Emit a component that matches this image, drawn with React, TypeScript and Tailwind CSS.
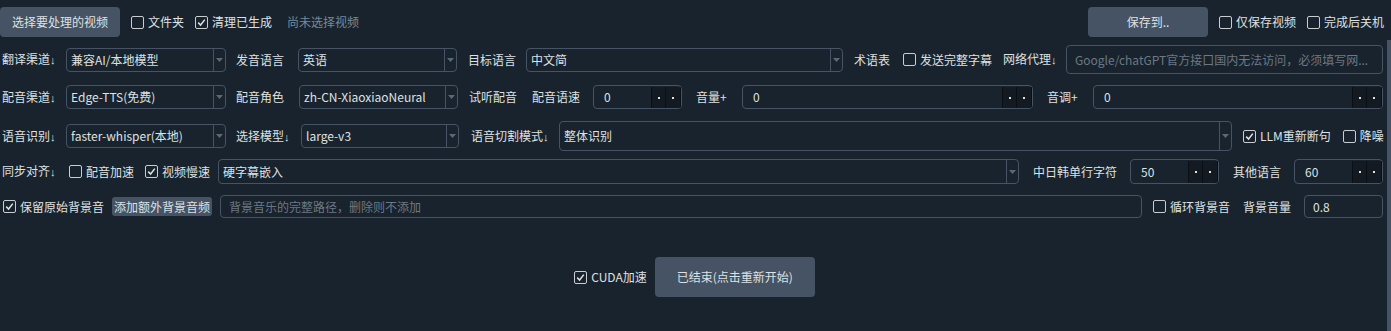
import type { ReactNode } from 'react';

const font = { fontFamily: '"Noto Sans CJK SC", "Microsoft YaHei", sans-serif' };

const Arrow = () => (
    <span className="text-[11px]" style={{ fontFamily: '"Liberation Sans", sans-serif' }}>↓</span>
);

const Check = ({ checked, label, className = '' }: { checked?: boolean; label: string; className?: string }) => (
    <label className={`flex items-center shrink-0 gap-[4px] text-[12px] text-[#dfe1e2] ${className}`}>
        <span className="w-[13px] h-[13px] rounded-[2px] border border-[#c9cdd0] flex items-center justify-center">
            {checked && (
                <svg width="9" height="9" viewBox="0 0 9 9">
                    <polyline points="1.2,4.6 3.6,7 7.8,1.6" fill="none" stroke="#dfe1e2" strokeWidth="1.5" />
                </svg>
            )}
        </span>
        <span>{label}</span>
    </label>
);

const Label = ({ children, w, className = '' }: { children: ReactNode; w: string; className?: string }) => (
    <span className={`shrink-0 text-[12px] text-[#dfe1e2] whitespace-nowrap ${w} ${className}`}>{children}</span>
);

const Combo = ({ value, w, h = 'h-[24px]' }: { value: string; w: string; h?: string }) => (
    <div className={`shrink-0 flex items-stretch border border-[#455364] rounded-[4px] bg-[#19232d] ${w} ${h}`}>
        <span className="flex-1 flex items-center pl-[4px] text-[12px] text-[#dfe1e2] whitespace-nowrap overflow-hidden">{value}</span>
        <span className="w-[12px] border-l border-[#455364] flex items-center justify-center">
            <svg width="7" height="4" viewBox="0 0 7 4">
                <polygon points="0,0 7,0 3.5,4" fill="#5c6975" />
            </svg>
        </span>
    </div>
);

const Spin = ({ value, w, h = 'h-[24px]' }: { value: string; w: string; h?: string }) => (
    <div className={`shrink-0 flex items-stretch border border-[#455364] rounded-[4px] bg-[#19232d] overflow-hidden ${w} ${h}`}>
        <span className="flex-1 flex items-center pl-[10px] text-[12px] text-[#dfe1e2]">{value}</span>
        <span className="w-[15px] mt-[1px] bg-[#131a21] border-l border-r border-[#0b0f13] flex items-center justify-center">
            <span className="w-[2px] h-[2px] bg-[#dfe1e2]" />
        </span>
        <span className="w-[15px] mt-[1px] bg-[#131a21] border-r border-[#0b0f13] flex items-center justify-center">
            <span className="w-[2px] h-[2px] bg-[#dfe1e2]" />
        </span>
    </div>
);

const Input = ({ value, placeholder, w, h }: { value?: string; placeholder?: string; w: string; h: string }) => (
    <div className={`shrink-0 flex items-center border border-[#455364] rounded-[4px] bg-[#19232d] pl-[8px] text-[12px] whitespace-nowrap overflow-hidden ${w} ${h}`}>
        {value ? <span className="text-[#dfe1e2]">{value}</span> : <span className="text-[#6c7883]">{placeholder}</span>}
    </div>
);

export default function App() {
    return (
        <div className="relative w-[1391px] h-[331px] bg-[#19232d] overflow-hidden pt-[7px]" style={font}>
            {/* 第一行 */}
            <div className="flex items-center h-[30px]">
                <button className="w-[120px] h-[30px] rounded-[4px] bg-[#455364] text-[12px] text-[#dfe1e2]">选择要处理的视频</button>
                <Check label="文件夹" className="ml-[11px]" />
                <Check checked label="清理已生成" className="ml-[11px]" />
                <span className="ml-[15px] text-[12px] text-[#788a99]">尚未选择视频</span>
                <div className="flex-1" />
                <button className="w-[120px] h-[30px] rounded-[4px] bg-[#455364] text-[12px] text-[#dfe1e2]">保存到..</button>
                <Check label="仅保存视频" className="ml-[11px]" />
                <Check label="完成后关机" className="ml-[11px] mr-[7px]" />
            </div>

            {/* 翻译 */}
            <div className="flex items-center h-[29px] mt-[8px] pl-[2px]">
                <Label w="w-[64px]">翻译渠道<Arrow /></Label>
                <Combo value="兼容AI/本地模型" w="w-[160px]" />
                <Label w="w-[62px]" className="ml-[10px]">发音语言</Label>
                <Combo value="英语" w="w-[159px]" />
                <Label w="w-[58px]" className="ml-[11px]">目标语言</Label>
                <Combo value="中文简" w="w-[317px]" />
                <Label w="w-[49px]" className="ml-[11px]">术语表</Label>
                <Check label="发送完整字幕" className="w-[100px]" />
                <Label w="w-[63px]">网络代理<Arrow /></Label>
                <Input placeholder="Google/chatGPT官方接口国内无法访问，必须填写网..." w="w-[317px]" h="h-[29px]" />
            </div>

            {/* 配音 */}
            <div className="flex items-center h-[24px] mt-[11px] pl-[2px]">
                <Label w="w-[64px]">配音渠道<Arrow /></Label>
                <Combo value="Edge-TTS(免费)" w="w-[160px]" />
                <Label w="w-[63px]" className="ml-[10px]">配音角色</Label>
                <Combo value="zh-CN-XiaoxiaoNeural" w="w-[159px]" />
                <Label w="w-[63px]" className="ml-[11px]">试听配音</Label>
                <Label w="w-[61px]">配音语速</Label>
                <Spin value="0" w="w-[89px]" />
                <Label w="w-[46px]" className="ml-[14px]">音量+</Label>
                <Spin value="0" w="w-[291px]" />
                <Label w="w-[46px]" className="ml-[14px]">音调+</Label>
                <Spin value="0" w="w-[290px]" />
            </div>

            {/* 识别 */}
            <div className="flex items-center h-[30px] mt-[12px] pl-[2px]">
                <Label w="w-[64px]">语音识别<Arrow /></Label>
                <Combo value="faster-whisper(本地)" w="w-[160px]" />
                <Label w="w-[65px]" className="ml-[10px]">选择模型<Arrow /></Label>
                <Combo value="large-v3" w="w-[158px]" />
                <Label w="w-[88px]" className="ml-[12px]">语音切割模式<Arrow /></Label>
                <Combo value="整体识别" w="w-[673px]" h="h-[30px]" />
                <Check checked label="LLM重新断句" className="ml-[11px]" />
                <Check label="降噪" className="ml-[12px]" />
            </div>

            {/* 对齐 */}
            <div className="flex items-center h-[25px] mt-[8px] pl-[2px]">
                <Label w="w-[67px]">同步对齐<Arrow /></Label>
                <Check label="配音加速" className="w-[76px]" />
                <Check checked label="视频慢速" className="w-[73px]" />
                <Combo value="硬字幕嵌入" w="w-[801px]" h="h-[25px]" />
                <Label w="w-[97px]" className="ml-[14px]">中日韩单行字符</Label>
                <Spin value="50" w="w-[89px]" h="h-[25px]" />
                <Label w="w-[61px]" className="ml-[14px]">其他语言</Label>
                <Spin value="60" w="w-[89px]" h="h-[25px]" />
            </div>

            {/* 背景音 */}
            <div className="flex items-center h-[23px] mt-[11px] pl-[3px]">
                <Check checked label="保留原始背景音" className="w-[109px]" />
                <button className="w-[100px] h-[19px] rounded-[3px] bg-[#455364] text-[12px] text-[#dfe1e2] whitespace-nowrap">添加额外背景音频</button>
                <div className="ml-[8px]">
                    <Input placeholder="背景音乐的完整路径，删除则不添加" w="w-[922px]" h="h-[23px]" />
                </div>
                <Check label="循环背景音" className="ml-[11px] w-[90px]" />
                <Label w="w-[61px]">背景音量</Label>
                <Input value="0.8" w="w-[79px]" h="h-[23px]" />
            </div>

            {/* 底部 */}
            <div className="flex items-center justify-center mt-[39px] h-[40px] pr-[2px]">
                <Check checked label="CUDA加速" />
                <button className="ml-[8px] w-[160px] h-[40px] rounded-[4px] bg-[#455364] text-[12px] text-[#dfe1e2]">已结束(点击重新开始)</button>
            </div>

            <div className="absolute right-0 top-[40px] bottom-0 w-[4px] bg-[#455364]" />
        </div>
    );
}
